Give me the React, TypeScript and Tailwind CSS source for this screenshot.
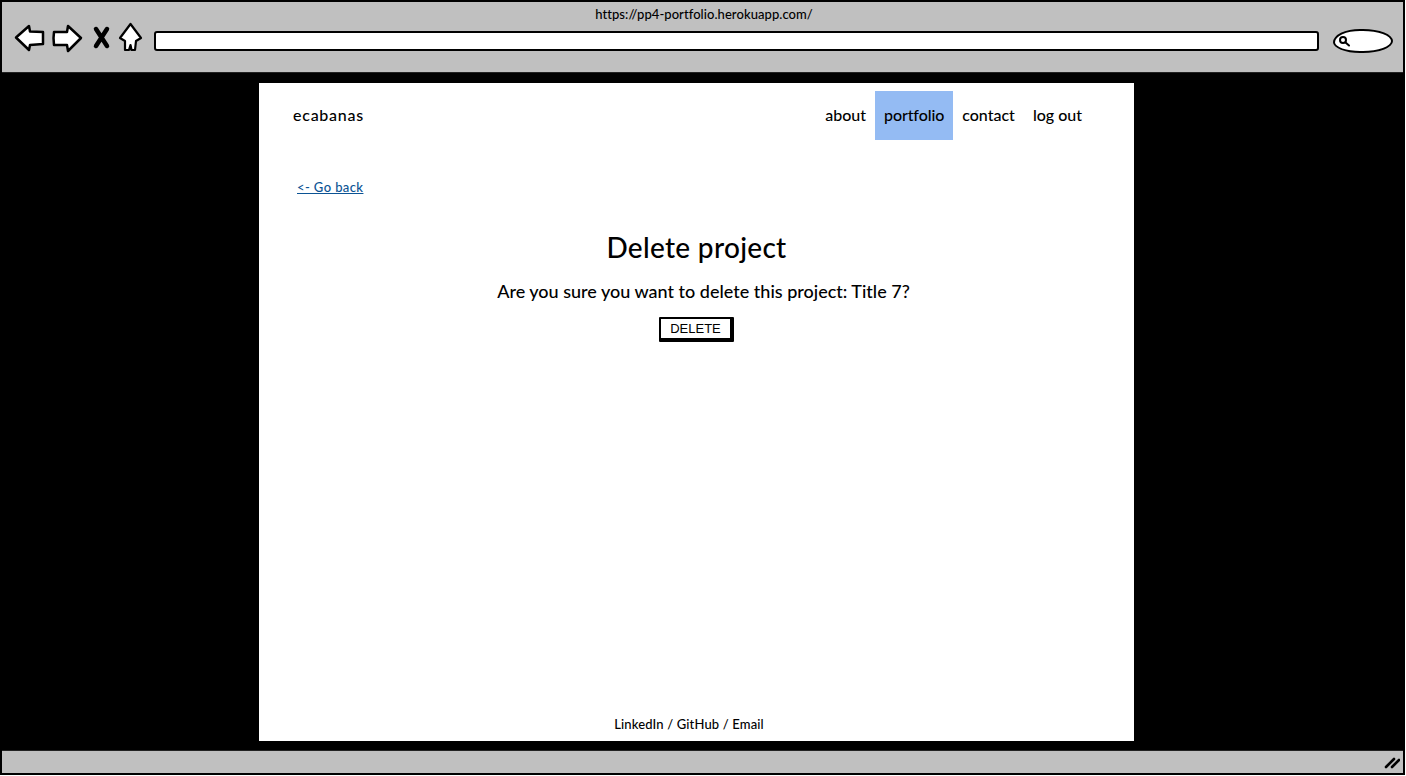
import React from 'react';

const font = 'font-["Lato","Noto_Sans",sans-serif]';

function BrowserIcons() {
  return (
    <div className="flex items-center h-[30px] shrink-0">
      <svg width="130" height="34" viewBox="0 0 130 34" fill="none" className="block">
        <path d="M2 16.5 L15 5 L16 10.5 L29 11 L29 23 L16 24 L15 29 Z" fill="#fff" stroke="#000" strokeWidth="2.5" strokeLinejoin="round" />
        <path d="M40 11 L53 11 L54 5 L67 17 L54 30 L53 24 L40 24 Q39 17 40 11 Z" fill="#fff" stroke="#000" strokeWidth="2.5" strokeLinejoin="round" />
        <path d="M82 8 L93 25 M93 8 L82 25" stroke="#000" strokeWidth="4.5" strokeLinecap="round" />
        <path d="M106 17 L116.5 3 L127 17 L122 20 L121 29 L117.5 29 L116.5 24 L115 29 L111 29 L111 20 Z" fill="#fff" stroke="#000" strokeWidth="2.2" strokeLinejoin="round" />
      </svg>
    </div>
  );
}

function SearchBox() {
  return (
    <div className="relative w-[60px] h-[24px] rounded-[45%_50%_50%_45%/55%_50%_50%_45%] border-[2px] border-black bg-white shrink-0">
      <svg width="12" height="12" viewBox="0 0 12 12" fill="none" className="absolute left-[3px] top-[4px]">
        <circle cx="5" cy="5" r="3" stroke="#000" strokeWidth="2" />
        <path d="M7.5 7.5 L11 10.5" stroke="#000" strokeWidth="2" strokeLinecap="round" />
      </svg>
    </div>
  );
}

export default function App() {
  return (
    <div className={`h-[776px] w-[1406px] overflow-hidden bg-white ${font}`}>
      <div className="flex h-[775px] w-[1405px] flex-col border-2 border-black bg-black">
        {/* browser chrome */}
        <div className="relative h-[71px] shrink-0 bg-[#c0c0c0] border-b-[1px] border-[#222]">
          <p className="pt-[3px] pl-[3px] text-center text-[13px] leading-[18px] tracking-[0.06px] font-medium text-black">
            https://pp4-portfolio.herokuapp.com/
          </p>
          <div className="flex items-center pl-[12px] pr-[10px]">
            <BrowserIcons />
            <div className="ml-[10px] h-[20px] flex-1 rounded-[3px] border-2 border-black bg-white mt-[6px]" />
            <div className="ml-[14px] mt-[5px]">
              <SearchBox />
            </div>
          </div>
        </div>

        {/* page */}
        <div className="flex flex-1 justify-center pt-[10px] pb-[9px] pr-[12px] bg-black">
          <div className="flex w-[875px] flex-col bg-white text-black">
            <nav className="flex h-[65px] items-start justify-between pt-[8px] pl-[34px] pr-[43px]">
              <span className="text-[16px] leading-[47px] pb-[2px] tracking-[0.75px] font-medium">ecabanas</span>
              <ul className="flex text-[16px] leading-[47px] font-medium">
                <li className="px-[9px] pb-[2px]">about</li>
                <li className="px-[9px] pb-[2px] tracking-[-0.1px] bg-[#94bbf3]">portfolio</li>
                <li className="px-[9px] pb-[2px]">contact</li>
                <li className="px-[9px] pb-[2px]">log out</li>
              </ul>
            </nav>

            <a href="#" className="ml-[38px] mt-[31px] self-start text-[13px] leading-[16px] tracking-[0.4px] font-medium text-[#0b5394] underline">
              &lt;- Go back
            </a>

            <main className="flex flex-1 flex-col items-center">
              <h1 className="mt-[32px] text-[28px] leading-[40px] tracking-[0.3px] font-medium">Delete project</h1>
              <p className="mt-[11px] ml-[14px] text-[18px] leading-[26px] font-medium">
                Are you sure you want to delete this project: Title 7?
              </p>
              <button className="mt-[13px] h-[25px] w-[75px] rounded-[1px] border-2 border-black border-r-[4px] border-b-[4px] bg-white pb-[1px] text-[13px] leading-none font-['Liberation_Sans',sans-serif]">
                DELETE
              </button>
            </main>

            <footer className="pb-[9px] pr-[15px] text-center text-[13px] leading-[16px] tracking-[0.15px] font-medium">
              LinkedIn / GitHub / Email
            </footer>
          </div>
        </div>

        {/* status bar */}
        <div className="flex h-[23px] shrink-0 items-center justify-end bg-[#c0c0c0] border-t border-[#222] pr-[3px]">
          <svg width="16" height="14" viewBox="0 0 16 14" fill="none">
            <path d="M2 12 L10 4 M8 12 L15 5" stroke="#000" strokeWidth="2.6" strokeLinecap="round" />
          </svg>
        </div>
      </div>
    </div>
  );
}
